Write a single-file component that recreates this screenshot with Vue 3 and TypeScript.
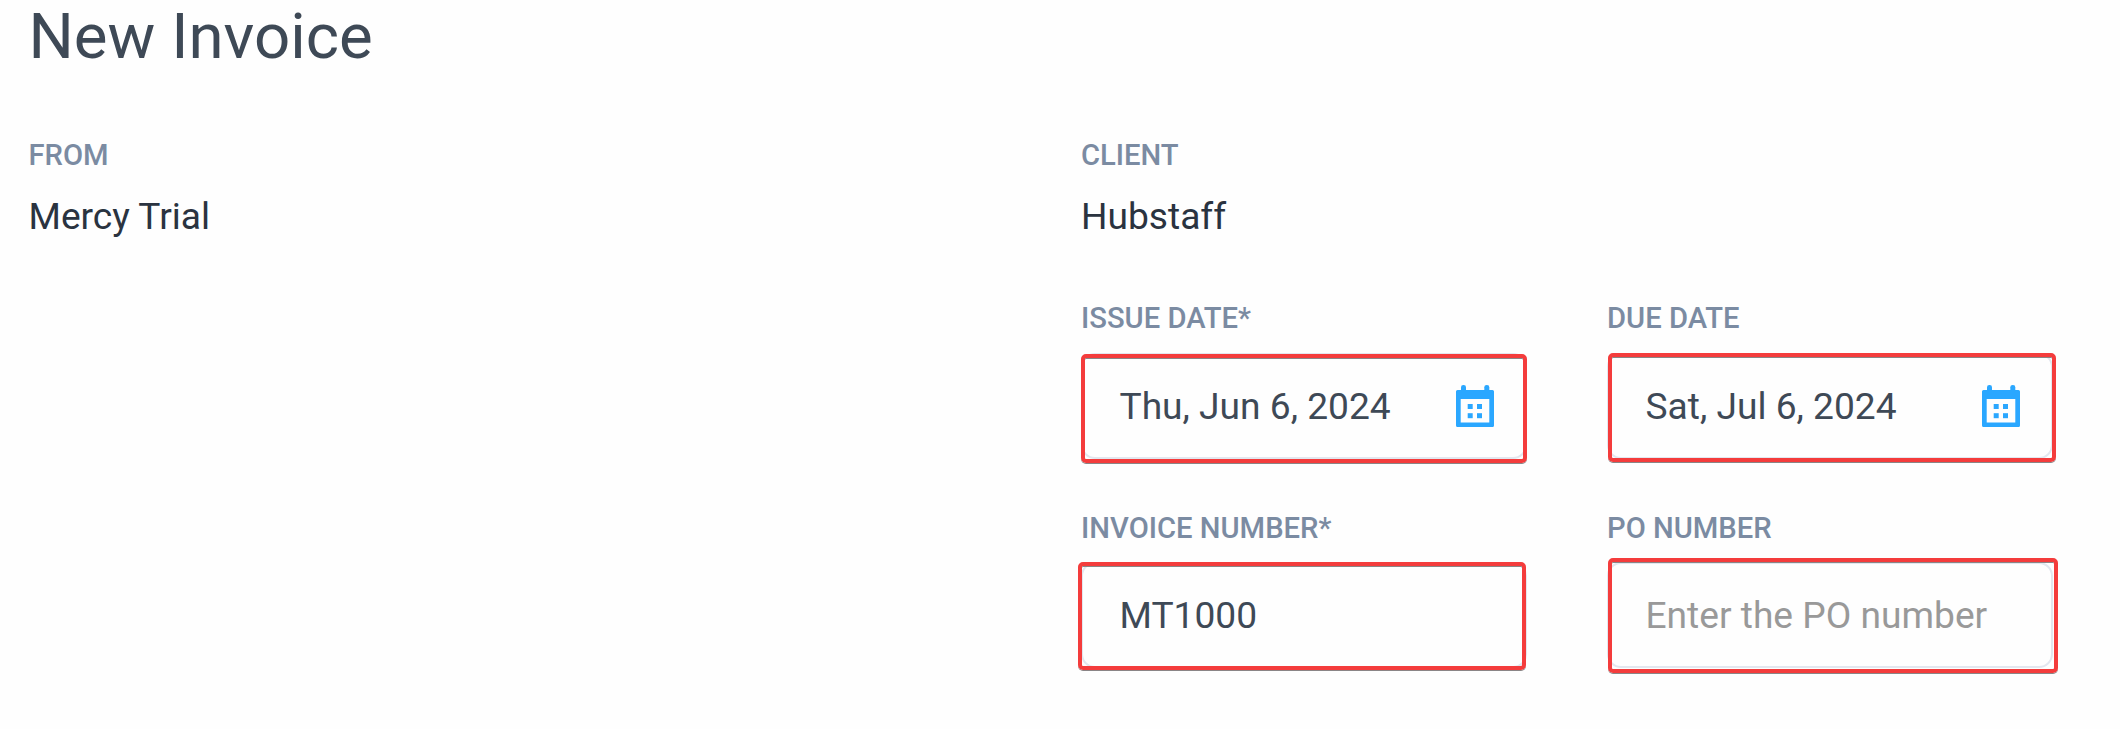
<script setup lang="ts">
interface Field {
  id: string
  label: string
  value: string
  placeholder?: string
  calendar?: boolean
}

const fields: Field[] = [
  { id: 'issue', label: 'ISSUE DATE*', value: 'Thu, Jun 6, 2024', calendar: true },
  { id: 'due', label: 'DUE DATE', value: 'Sat, Jul 6, 2024', calendar: true },
  { id: 'invoice', label: 'INVOICE NUMBER*', value: 'MT1000' },
  { id: 'po', label: 'PO NUMBER', value: '', placeholder: 'Enter the PO number' },
]
</script>

<template>
  <main class="page">
    <h1 class="title">New Invoice</h1>
    <div class="columns">
      <section class="party">
        <div class="label">FROM</div>
        <div class="name">Mercy Trial</div>
      </section>
      <section class="details">
        <div class="party">
          <div class="label">CLIENT</div>
          <div class="name">Hubstaff</div>
        </div>
        <div class="fields">
          <div v-for="f in fields" :key="f.id" class="field">
            <div class="label">{{ f.label }}</div>
            <div :class="['control', { plain: !f.calendar }]">
              <span :class="['text', { placeholder: !f.value }]">{{ f.value || f.placeholder }}</span>
              <svg v-if="f.calendar" class="icon" viewBox="0 0 38 42" width="38" height="42">
                <g fill="#2aa7ff">
                  <rect x="5" y="0" width="5" height="9" rx="2.3" />
                  <rect x="28.3" y="0" width="5" height="9" rx="2.3" />
                  <path
                    fill-rule="evenodd"
                    d="M1.500 5H36.500Q38 5 38 6.500V40.500Q38 42 36.500 42H1.500Q0 42 0 40.500V6.500Q0 5 1.500 5ZM4.700 14V37.500H33.300V14Z"
                  />
                  <rect x="11.700" y="19" width="5" height="5" />
                  <rect x="21" y="19" width="5" height="5" />
                  <rect x="11.700" y="28.200" width="5" height="5" />
                  <rect x="21" y="28.200" width="5" height="5" />
                </g>
              </svg>
              <span :class="['highlight', f.id]"></span>
            </div>
          </div>
        </div>
      </section>
    </div>
  </main>
</template>

<style>
body {
  margin: 0;
  background: #fefefe;
}
</style>

<style scoped>
.page {
  box-sizing: border-box;
  width: 2120px;
  height: 729px;
  padding-left: 28.5px;
  font-family: Roboto, 'Liberation Sans', sans-serif;
}
.title {
  margin: 0 0 65px;
  font-size: 63.6px;
  line-height: 73px;
  font-weight: 400;
  color: #3e4956;
}
.columns {
  display: grid;
  grid-template-columns: 1052.5px 973px;
}
.label {
  font-size: 29.2px;
  line-height: 34px;
  font-weight: 500;
  color: #7b8ba2;
  white-space: nowrap;
}
.name {
  margin-top: 22px;
  font-size: 37.15px;
  line-height: 46px;
  color: #2a3340;
}
.fields {
  display: grid;
  grid-template-columns: 446px 446px;
  column-gap: 80px;
  row-gap: 52px;
  margin-top: 61px;
}
.control {
  position: relative;
  display: flex;
  align-items: center;
  justify-content: space-between;
  box-sizing: border-box;
  height: 106px;
  margin-top: 18px;
  padding: 0 31.5px 0 36.5px;
  border: 2px solid #e2e7ef;
  border-radius: 14px;
}
.control.plain {
  margin-top: 17px;
}
.text {
  margin-top: 2px;
  font-size: 37.15px;
  line-height: 46px;
  color: #3e4956;
  white-space: nowrap;
}
.text.placeholder {
  color: #999;
}
.icon {
  display: block;
}
/* Annotation frames drawn over the inputs */
.highlight {
  position: absolute;
  box-sizing: border-box;
  border: 4px solid #f43c3c;
  border-radius: 5px;
  box-shadow: 0 1px 0 #8a8586, inset 0 1px 0 #8a8586;
}
.highlight.issue {
  left: -2px;
  top: -1px;
  width: 446px;
  height: 109px;
}
.highlight.due {
  left: -1px;
  top: -2px;
  width: 448px;
  height: 109px;
}
.highlight.invoice {
  left: -5px;
  top: -2px;
  width: 448px;
  height: 108px;
}
.highlight.po {
  left: -1px;
  top: -6px;
  width: 450px;
  height: 115px;
}
</style>
